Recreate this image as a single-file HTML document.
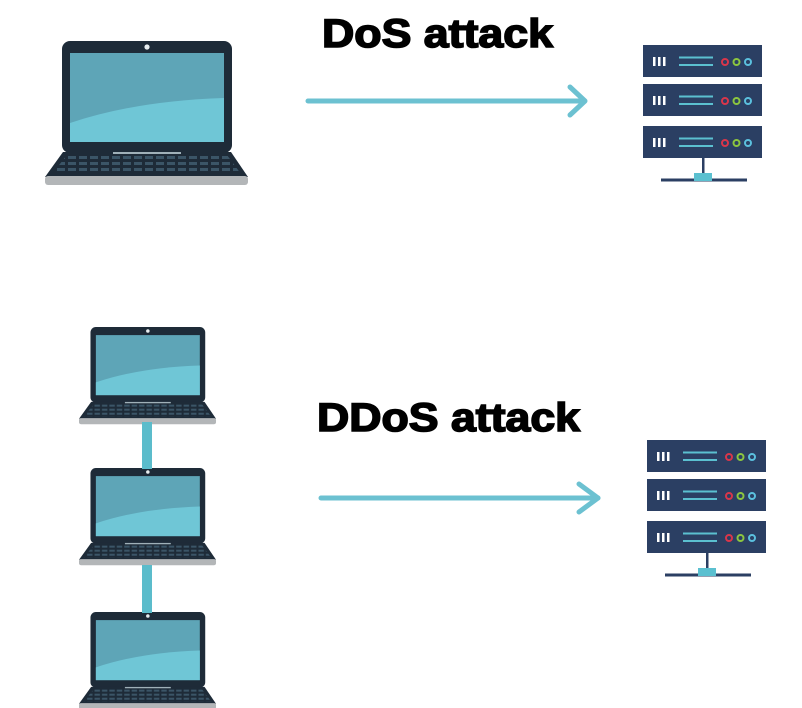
<!DOCTYPE html>
<html><head><meta charset="utf-8"><style>
html,body{margin:0;padding:0;background:#fff;width:802px;height:708px;overflow:hidden}
</style></head><body>
<svg width="802" height="708" viewBox="0 0 802 708" xmlns="http://www.w3.org/2000/svg">
<defs>
<pattern id="keys" x="0" y="0" width="11" height="6" patternUnits="userSpaceOnUse">
<rect x="1" y="1" width="8" height="3" fill="#3b5567"/>
</pattern>
<g id="laptop">
<rect x="17" y="0" width="170" height="112" rx="8" fill="#1e2b38"/>
<rect x="25" y="12" width="154" height="89" fill="#5ea5b7"/>
<path d="M25,82 Q90,60 179,57 L179,101 L25,101 Z" fill="#6fc6d6"/>
<circle cx="102" cy="6" r="2.6" fill="#e8eef0"/>
<polygon points="18,111 186,111 203,136 0,136" fill="#1e2b38"/>
<polygon points="22,114 182,114 196,133 7,133" fill="url(#keys)"/>
<rect x="68" y="111" width="68" height="2" fill="#9fb0b8"/>
<rect x="0" y="135" width="203" height="9" rx="3" fill="#b3b6b8"/>
</g>
<g id="server">
<g id="unit">
<rect x="0" y="0" width="119" height="32" fill="#2b3f63"/>
<rect x="10" y="12" width="2.5" height="9" fill="#fff"/>
<rect x="15" y="12" width="2.5" height="9" fill="#fff"/>
<rect x="20" y="12" width="2.5" height="9" fill="#fff"/>
<rect x="36" y="11.5" width="34" height="2" fill="#5bc0d0"/>
<rect x="36" y="19" width="34" height="2" fill="#5bc0d0"/>
<circle cx="82" cy="17" r="3" fill="none" stroke="#d9364a" stroke-width="2"/>
<circle cx="93.5" cy="17" r="3" fill="none" stroke="#8cc63f" stroke-width="2"/>
<circle cx="105" cy="17" r="3" fill="none" stroke="#5bc0de" stroke-width="2"/>
</g>
<use href="#unit" y="39"/>
<use href="#unit" y="81"/>
<rect x="59" y="113" width="2.5" height="16" fill="#2b3f63"/>
<rect x="18" y="133.5" width="86" height="3" fill="#2b3f63"/>
<rect x="51" y="128" width="18" height="8" fill="#5bc0d0"/>
</g>
</defs>

<text x="322" y="47" font-family="Liberation Sans, sans-serif" font-weight="bold" font-size="40" textLength="231" lengthAdjust="spacingAndGlyphs" fill="#000" stroke="#000" stroke-width="1.6">DoS attack</text>
<text x="317" y="431" font-family="Liberation Sans, sans-serif" font-weight="bold" font-size="40" textLength="263" lengthAdjust="spacingAndGlyphs" fill="#000" stroke="#000" stroke-width="1.6">DDoS attack</text>

<use href="#laptop" x="45" y="41"/>
<g transform="translate(79,327) scale(0.675)"><use href="#laptop"/></g>
<g transform="translate(79,468) scale(0.675)"><use href="#laptop"/></g>
<g transform="translate(79,612) scale(0.675)"><use href="#laptop"/></g>
<rect x="142" y="422" width="10" height="47" fill="#5bbccb"/>
<rect x="142" y="565" width="10" height="48" fill="#5bbccb"/>

<use href="#server" x="643" y="45"/>
<use href="#server" x="647" y="440"/>

<g stroke="#6cc1d1" stroke-width="5" fill="none" stroke-linecap="round" stroke-linejoin="round">
<line x1="308" y1="101" x2="584" y2="101"/>
<polyline points="570,87 585,101 570,115"/>
<line x1="321" y1="498" x2="598" y2="498"/>
<polyline points="579,484 598,498 579,512"/>
</g>
</svg>
</body></html>
